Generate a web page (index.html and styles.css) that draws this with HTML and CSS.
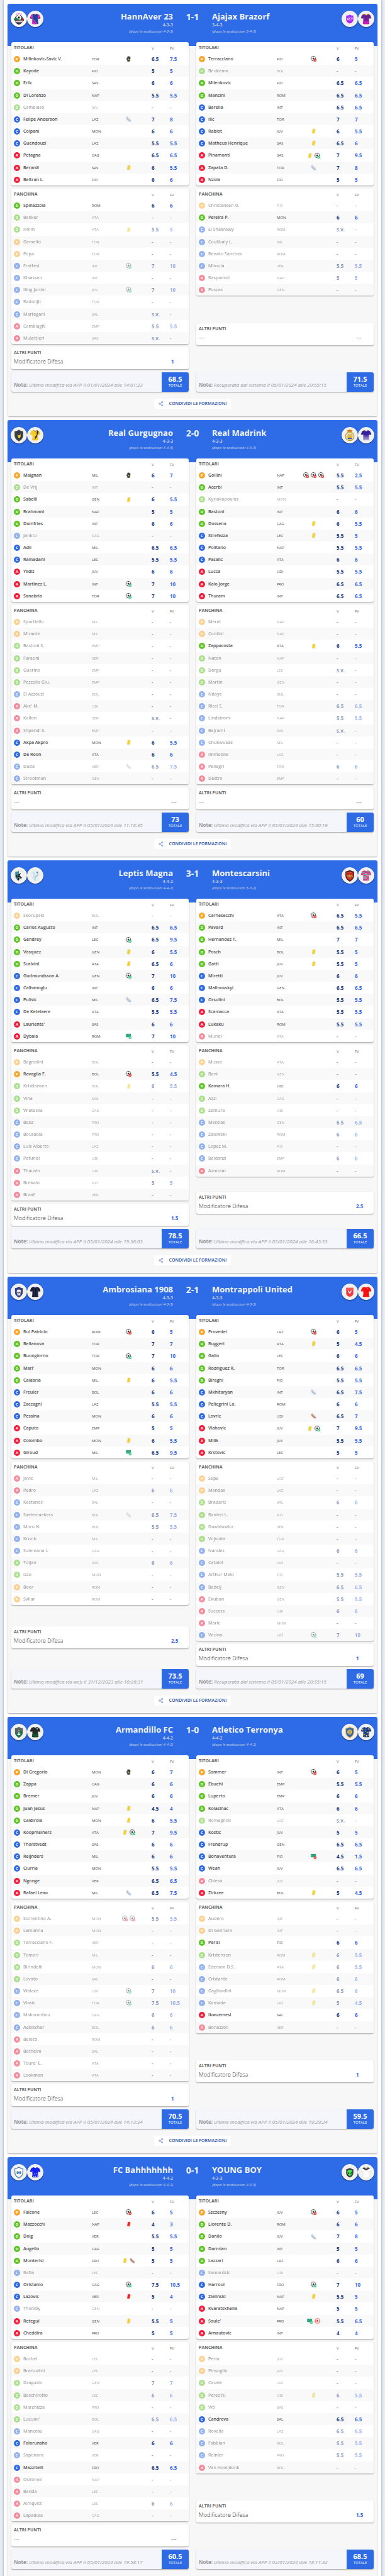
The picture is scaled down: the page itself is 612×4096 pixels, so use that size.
FILE: index.html
```html
<!DOCTYPE html>
<html lang="it">
<head>
<meta charset="utf-8">
<meta name="viewport" content="width=device-width, initial-scale=1">
<title>Formazioni</title>
<link rel="stylesheet" href="styles.css">
</head>
<body>
<svg class="sprite" aria-hidden="true">
  <defs>
    <clipPath id="jersey-clip"><path d="M16 7 21 9 26 7 32 10 36 19 31 21 29.500 17Q28 26 30 35 21 37 12 35 14 26 12.500 17L11 21 6 19 10 10Z"/></clipPath>
    <clipPath id="shield-clip"><path d="M21 7Q26 11 32 11V22Q32 31 21 37 10 31 10 22V11Q16 11 21 7Z"/></clipPath>
    <linearGradient id="fade-indigo" x1="0" y1="0" x2="0" y2="1"><stop offset=".45" stop-color="#33209a"/><stop offset="1" stop-color="#f4f2fa"/></linearGradient>
    <linearGradient id="fade-violet" x1="0" y1="0" x2="0" y2="1"><stop offset="0" stop-color="#9c3bff"/><stop offset="1" stop-color="#b514e8"/></linearGradient>
  </defs>
  <symbol id="ball" viewBox="0 0 14 14">
    <circle cx="6.500" cy="6.500" r="5.800" fill="#fff" stroke="#333" stroke-width=".9"/>
    <path d="M6.500 3.900 9 5.700 8 8.500H5L4 5.700ZM4.500 1 6.500 2 8.500 1 7.500.5h-2ZM.8 5 2.300 5.500 1.500 8.300.7 7ZM12.200 5 10.700 5.500 11.500 8.300 12.300 7ZM3.200 9.700 4.600 10.200 5 12.200 3 11ZM9.800 9.700 8.400 10.200 8 12.200 10 11Z" fill="#333"/>
  </symbol>
  <symbol id="tick" viewBox="0 0 14 14"><circle cx="10.500" cy="10.500" r="3.500" fill="#3ecf86"/><path d="m8.800 10.500 1.300 1.300 2.200-2.400" fill="none" stroke="#fff" stroke-width="1"/></symbol>
  <symbol id="cross" viewBox="0 0 14 14"><circle cx="10.500" cy="10.500" r="3.500" fill="#f0312e"/><path d="m9.300 9.300 2.400 2.400m0-2.400-2.400 2.400" stroke="#fff" stroke-width="1"/></symbol>
  <symbol id="net" viewBox="0 0 14 14"><path d="M.5 1.500h12v8H.5Z" fill="#1f9e74"/><path d="M2 3v5M11 3v5M2 6.500h9M5 2v2h3V2" fill="none" stroke="#7fd9bb" stroke-width=".7"/></symbol>
  <symbol id="ev-b" viewBox="0 0 14 14"><use href="#ball"/><use href="#tick"/></symbol>
  <symbol id="ev-x" viewBox="0 0 14 14"><use href="#ball"/><use href="#cross"/></symbol>
  <symbol id="ev-p" viewBox="0 0 14 14"><use href="#net"/><use href="#tick"/></symbol>
  <symbol id="ev-q" viewBox="0 0 14 14"><use href="#net"/><use href="#cross"/></symbol>
  <symbol id="ev-z" viewBox="0 0 14 14"><circle cx="7" cy="7" r="6" fill="#fff" stroke="#ef3430"/><path d="M7 4.300 9.500 6 8.500 9h-3L4.500 6ZM4.500 1.500 7 3l2.500-1.500ZM1.200 6 3 6.500 2.300 9.500 1.200 8ZM12.800 6 11 6.500 11.700 9.500 12.800 8ZM4 10.500 5.500 11 6 13 4 12ZM10 10.500 8.500 11 8 13 10 12Z" fill="#ef3430"/></symbol>
  <symbol id="ev-y" viewBox="0 0 14 14"><path d="M5.500 1.200 11.300 2.200 9 12.500 3.200 11.500Z" fill="#f5d227"/></symbol>
  <symbol id="ev-r" viewBox="0 0 14 14"><path d="M5.500 1.200 11.300 2.200 9 12.500 3.200 11.500Z" fill="#f3201d"/></symbol>
  <symbol id="ev-s" viewBox="0 0 14 14"><path d="M1 3Q2 .8 4 1L7 5.500 12.800 10.300 12 12.500 8 11.500 2.500 6.500Z" fill="#b9cfe6"/><path d="m2 6 6 5.500 4 1" stroke="#8a9db3" fill="none" stroke-width=".8"/></symbol>
  <symbol id="ev-o" viewBox="0 0 14 14"><path d="M1 3Q2 .8 4 1L7 5.500 12.800 10.300 12 12.500 8 11.500 2.500 6.500Z" fill="#c98d79"/><path d="m2 6 6 5.500 4 1" stroke="#8d5e50" fill="none" stroke-width=".8"/></symbol>
  <symbol id="ev-g" viewBox="0 0 14 14"><path d="M4 13.500 3.500 10 1 6.500 2.200 5.500 3.800 6.800 3.300 2.500 5 2 5.500.8 7.300.7 8 1.200 9.600 1.500 10 3 11.500 3.500 10.800 9.500 9.500 13.500Z" fill="#3f3f42"/><path d="m7.200 6 .7 1.500 1.500.2-1.100 1 .3 1.600-1.400-.8-1.400.8.3-1.600-1.100-1 1.500-.2Z" fill="#f2c92b"/></symbol>
  <symbol id="share" viewBox="0 0 14 14"><g fill="none" stroke="#2b56a8" stroke-width="1"><circle cx="3" cy="7" r="1.800"/><circle cx="10" cy="2.500" r="1.800"/><circle cx="10" cy="11.500" r="1.800"/><path d="m4.600 6 3.800-2.500M4.600 8l3.800 2.500"/></g></symbol>
</svg>
<main class="page" id="page"></main>
<script src="app.js"></script>
</body>
</html>
```

FILE: styles.css
```css
* { box-sizing: border-box; }

html { height: 100%; overflow: hidden; background: #e9eef6; }

body {
  margin: 0;
  height: 100%;
  overflow: hidden;
  font-family: "Open Sans", "Noto Sans", sans-serif;
  font-size: 7px;
  line-height: 10px;
  color: #4c4c4c;
}

.sprite { position: absolute; width: 0; height: 0; }

.page {
  display: flex;
  flex-direction: column;
  gap: 6px;
  margin: 0 6px;
  padding: 6px;
  background: #fff;
  box-shadow: 0 0 4px rgba(60, 70, 90, .5);
}

.match {
  display: flex;
  flex-direction: column;
  align-items: center;
  padding-bottom: 12px;
  border-radius: 3px;
  background: linear-gradient(#2e6be6 67px, #f7f7f7 67px);
  box-shadow: 0 1px 2px rgba(0, 0, 0, .35);
}

.match-head {
  display: grid;
  grid-template-columns: 1fr 62px 1fr;
  width: 100%;
  height: 61px;
  padding: 11px 5px 0;
  color: #f1f3f8;
}

.side { display: flex; justify-content: space-between; align-items: flex-start; }
.side.away { flex-direction: row-reverse; }
.home .names { text-align: right; }

.crests { display: flex; }
.crest {
  width: 26px;
  height: 26px;
  border-radius: 50%;
  background: #f0f0f0;
  border: 1px solid #fff;
  box-shadow: 0 1px 2px rgba(0, 0, 0, .4);
}

.team-name { margin: 0; font-size: 13px; line-height: 18px; font-weight: 700; }
.module { margin: 0; font-weight: 600; color: #ccd3e3; }
.module-after { margin: 0; font-style: italic; font-size: 6px; line-height: 11px; color: #ccd3e3; }
.score { margin: 0; text-align: center; font-size: 14px; line-height: 19px; font-weight: 700; }

.columns { display: grid; grid-template-columns: 1fr 1fr; gap: 12px; width: 100%; padding: 0 6px; }
.column { display: flex; flex-direction: column; gap: 5px; }

.card { border-radius: 3px; background: #fff; box-shadow: 0 1px 2px rgba(0, 0, 0, .35); }

.lineup { width: 100%; table-layout: fixed; border-spacing: 0; }
.col-role { width: 19px; }
.col-club { width: 29px; }
.col-events { width: 60px; }
.col-vote { width: 35px; }
.col-fv { width: 30px; }
.lineup th, .lineup td { padding: 0; text-align: left; }
.lineup thead th { height: 17px; padding-top: 3px; font-weight: 400; font-size: 6px; color: #666; }
.lineup thead .title, .card-title { font-weight: 700; font-size: 7px; color: #666; }
.lineup thead .title { padding: 0 0 0 4px; }
.lineup tbody tr { height: 19px; }
.lineup tbody tr:nth-child(6n+3) { height: 20px; }
.lineup tbody tr:nth-child(even) td { background: #f9f9f9; }
.lineup td:first-child { padding-left: 4px; border-radius: 3px 0 0 3px; }
.lineup td:last-child { border-radius: 0 3px 3px 0; }
.lineup .vote { padding-left: 6px; font-weight: 700; font-size: 8px; color: #18377c; }
.lineup .fv { font-weight: 700; font-size: 8px; color: #3767e6; }
.lineup thead .vote, .lineup thead .fv { font-weight: 400; font-size: 6px; color: #666; }
.player { font-weight: 600; white-space: nowrap; }
.club { font-size: 6px; }
.events { line-height: 0; }
.event-list { display: flex; justify-content: center; gap: 3px; }
.event { width: 9px; height: 9px; filter: drop-shadow(0 0 1px rgba(0, 0, 0, .2)); }
.off td > * { opacity: .5; }

.role {
  display: block;
  width: 10px;
  height: 10px;
  border-radius: 50%;
  color: #fff;
  font-size: 6px;
  font-weight: 700;
  text-align: center;
}
.role-p { background: #faa62a; }
.role-d { background: #5bc51f; }
.role-c { background: #2d6ae3; }
.role-a { background: #f31c3c; }

.extras { height: 35px; margin: auto 0; padding: 4px 8px 0 4px; font-size: 9px; }
.card-title { margin: 0; }
.extra { display: flex; justify-content: space-between; padding-top: 2px; line-height: 14px; }
.extra dt { font-weight: 300; color: #333; }
.extra dd { margin: 0; width: 20px; }
.extra .value { font-weight: 700; font-size: 8px; color: #3767e6; }
.extras dl { margin: 0; }

.footer { display: flex; height: 31px; overflow: hidden; background: #f4f6fb; }
.note { flex: 1; margin: 0; padding: 15px 0 0 4px; font-size: 8px; color: #999; white-space: nowrap; }
.total {
  width: 43px;
  padding-top: 4px;
  background: #2d6ae3;
  color: #fff;
  text-align: center;
  font-size: 6px;
  line-height: 8px;
}
.total strong { display: block; font-size: 11px; line-height: 13px; }

.share {
  display: flex;
  align-items: center;
  gap: 9px;
  height: 16px;
  margin-top: 11px;
  padding: 0 7px;
  border: 0;
  border-radius: 2px;
  background: #fff;
  color: #2650a3;
  font: 600 7px/16px "Open Sans", "Noto Sans", sans-serif;
}
.share svg { width: 8px; height: 8px; }
```

FILE: app.js
```js
const jersey = inner => `<g clip-path="url(#jersey-clip)">${inner}</g>`;
const shield = inner => `<g clip-path="url(#shield-clip)">${inner}</g>`;
const fill = color => `<rect width="42" height="42" fill="${color}"/>`;
const edge = color => `<path d="M21 7Q26 11 32 11V22Q32 31 21 37 10 31 10 22V11Q16 11 21 7Z" fill="none" stroke="${color}" stroke-width="2"/>`;

const art = {
  hann: `${fill('#fff')}<path d="m15 5 1 2 2-1-1 2 1 1-3 0-3 0 1-1-1-2 2 1ZM21 3l1 2 2 0-1 2 0 2-2-1-2 1 0-2-1-2 2 0ZM27 5l1 2 2-1-1 2 1 1h-6l1-1-1-2 2 1Z" fill="#f27bb5"/><path d="M10 22q0-12 11-12t11 12v6q-3 7-11 9-8-2-11-9Z" fill="#26323d"/><circle cx="21" cy="17" r="7" fill="#fff"/><path d="m21 14 3 2-1 4h-4l-1-4ZM15 14l3-3h-2ZM27 14l-3-3h2Z" fill="#222"/><path d="M7 20q6-4 14 2t13 0v4q-6 3-13-1T7 26Z" fill="#268a48"/><path d="M29 20h6v7l-5-2Z" fill="#b3302c"/><path d="M11 26h20v4H11Z" fill="#f1b9cb"/><path d="M13 32h16" stroke="#aebac4"/>`,
  hannJ: jersey(`${fill('#1d4597')}<path d="M0 0h13l1 17-2 5H0ZM42 0H29l-1 17 2 5h12Z" fill="#f32bd0"/><path d="M12 24q3 6 12 14H10ZM12 21q8 4 15 16" stroke="#f32bd0" stroke-width="2" fill="#f32bd0"/><path d="M6 17l6 3M30 20l6-3" stroke="#7c1430" stroke-width="3"/><path d="m16 7 5 3 5-3" fill="none" stroke="#7c1430" stroke-width="2"/>`),
  ajax: `<path d="M11 12q6 0 10-3 4 3 10 3v11q0 7-10 11-10-4-10-11Z" fill="url(#fade-violet)"/><g fill="none" stroke="#fff" stroke-width="1.500"><path d="M17 18q-3 3-2 6 3 1 3-2 0-2-2-1M23 18h-3v3q3 0 2 4h-2M24 26l1-1M27 17q-3 1-1 3 3 0 2-2 0 5-2 6"/></g>`,
  ajaxJ: jersey(`${fill('#652192')}<path d="M8 29l3-3 2 2 2-5 2 6 3-4 3 5 3-7 2 5 3-2v14H8ZM16 20l2 2-1 2ZM24 18l2 2-2 1ZM20 22l2 1-1 2Z" fill="#c91bb8"/><path d="m15 7 6 3 6-3M6 19l5 2M31 21l5-2" fill="none" stroke="#e6b427" stroke-width="2.500"/>`),
  gurg: `${shield(`${fill('#333a40')}<path d="M17 16l1 8 2 5h4l2-5-1-9-1 6h-5Z" fill="#eac63c"/>`)}${edge('#454d54')}`,
  gurgJ: jersey(`${fill('#f5cd2b')}<path d="m27 7-3 10 3-1-8 13 3-1-4 9 10-15-3 1 5-8V8Z" fill="#2a2a2a"/><path d="m16 7 5 3 5-3" fill="none" stroke="#2a2a2a" stroke-width="1.500"/>`),
  drink: `<circle cx="21" cy="24" r="12" fill="#e9d9a0" stroke="#c39b35" stroke-width="2"/><path d="M14 24h14M16 18l10 12M26 18 16 30" stroke="#8c95a0" stroke-width="2"/><path d="M17 22q4-5 8 0l2 5q-6 5-12 0Z" fill="#f3b51d"/><path d="M14 28h14l-2 4h-9Z" fill="#2f63b4"/><path d="m13 5 4 3 4-5 4 5 4-3-2 8H15Z" fill="#d9ab36"/><path d="M16 9h10" stroke="#c7352d" stroke-width="2"/>`,
  drinkJ: jersey(`${fill('url(#fade-indigo)')}<path d="m16 7 5 3 5-3M6 19l5 2M31 21l5-2" fill="none" stroke="#e8c24a" stroke-width="1.500"/>`),
  leptis: `${shield(`${fill('#fff')}<path d="M0 0h21v42H0Z" fill="#3b8b9c"/><path d="M17 20q-3 0-3 3t4 2 5-5 2-4-3 2 2 6 3 4-5 0-4 4 4-1" fill="none" stroke="#1c1c1c" stroke-width="2.500"/>`)}${edge('#d4dde2')}`,
  leptisJ: jersey(`${fill('#e3edf2')}<path d="M24 10q8 6 2 12-8 3-5 15" fill="none" stroke="#9fc6d2" stroke-width="3"/><path d="M14 12q6 2 4 8t-4 9" fill="none" stroke="#c3dbe3" stroke-width="3"/><path d="M24 13h4" stroke="#4c83a8" stroke-width="2"/>`),
  monte: `${shield(`${fill('#d4271f')}<path d="M10 8h22v7H10Z" fill="#b5201b"/><path d="m21 16 5 15-5-6-5 6Z" fill="#d6b05a" stroke="#7a5a1a"/><path d="M13 22h16" stroke="#c9a24a" stroke-width="3"/>`)}${edge('#2a1b23')}<path d="M13 13h16" stroke="#f1d9a0" stroke-dasharray="1 1"/>`,
  monteJ: jersey(`${fill('#e62e7c')}<path d="M8 13h9M20 11h14M14 18l12 1M13 24h8M22 26l8-3M12 31l9-2M23 33h7M28 15l6 3" stroke="#55b5ad" stroke-width="2.500"/><path d="M17 15h7M16 28h8M20 22h9" stroke="#f3c4d3" stroke-width="1.500"/>`),
  ambro: `${shield(`${fill('#3b3f47')}<path d="M10 8h9v30h-9ZM24 8h4v30h-4Z" fill="#3440a0"/>`)}<path d="M15 21q0-6 6-6t6 6q0 4-2 5v5h-8v-5q-2-1-2-5Z" fill="#f5f5f5"/><path d="M17 21h3v3h-3ZM22 21h3v3h-3ZM20 26h2v1h-2ZM19 29v2M21 29v2M23 29v2" fill="#333" stroke="#333" stroke-width=".6"/>`,
  ambroJ: jersey(`${fill('#16161f')}<path d="M15 7v30M19 9v28M24 9v28M28 8v28" stroke="#353a7c" stroke-width="1.500"/><path d="m16 7 5 2 5-2M6 18l5 2M31 20l5-2" stroke="#5346c8" fill="none" stroke-width="2"/>`),
  mont: `<path d="M11 10h20v15q0 8-10 10-10-2-10-10Z" fill="#ef3b3f"/><path d="M11 10h20v6H11Z" fill="#f15a58"/><path d="m15 18 3 0 3 5 3-5h3l-5 8h-2Z" fill="#fff"/>`,
  montJ: jersey(`${fill('#fb1212')}<path d="M13 16h16M14 22l14-2M14 28h14M6 19l5 2M31 21l5-2" stroke="#c40c0c"/><path d="M24 12h2" stroke="#fff"/>`),
  arma: `${shield(`${fill('#1d6f4a')}<path d="M0 0h42v16L0 26Z" fill="#59625f"/>`)}<path d="M21 14q2 4 0 6-2-2 0-6ZM20 21h2v5h4q-1 4-5 4t-5-4h4Z" fill="#fff"/>`,
  armaJ: jersey(`${fill('#242827')}<path d="M8 31l3-5 3 2 2-6 3 5 2-3 3 5 3-7 3 5 2-2v14H8Z" fill="#0f4a2b"/><path d="m14 25 3 5-2 4M24 23l2 5-3 6M19 28l1 5M6 19l5 2M31 21l5-2" stroke="#2c7a45" fill="none"/><path d="M25 12h3" stroke="#fff" stroke-width="2"/>`),
  terro: `${shield(fill('#2c5da6'))}${edge('#d9b94d')}<circle cx="21" cy="21" r="7" fill="#d9bb53"/><path d="m17 19 3 1M22 20l3-1M19 25q2-2 4 0M21 20v3M16 15l2 2M26 15l-2 2M15 26l3-1M27 26l-3-1" stroke="#2c5da6" fill="none"/>`,
  terroJ: jersey(`${fill('#1b3f8c')}<path d="m10 11 4 3-3 3ZM28 9l3 4-4 2ZM17 17l3 3-2 2ZM24 20l4 2-4 3ZM14 26l4 1-3 3ZM20 29l5 2-4 4ZM26 27l3 3-3 1ZM13 34h4v3h-4ZM19 12l3 1-2 2Z" fill="#f3c52e"/><path d="M6 19l5 2M31 21l5-2" stroke="#f3c52e" stroke-width="3"/>`),
  bahh: `${shield(fill('#fff'))}${edge('#3b74ab')}<path d="m15 18 5 1 1 3 1-3 5-1 0 8-4 0-2-3-2 3-4 0Z" fill="#3b74ab"/><path d="m17 20 2 3M25 20l-2 3" stroke="#cfe0ef"/>`,
  bahhJ: jersey(`${fill('#1620ee')}<path d="m14 27 2 1-1 2ZM18 24l3 2-2 2ZM23 26l3-2 1 3ZM16 31l3 1-2 3ZM22 30l2 2-3 2ZM26 31l3-1-1 4ZM13 34l3 0-1 3ZM23 36l3-1v3ZM20 35h2v2h-2Z" fill="#fff"/><path d="M24 12h2" stroke="#9fb0ff"/>`),
  young: `<path d="m21 9 10 4v10q0 8-10 13-10-5-10-13V13Z" fill="#3c4044"/><path d="M21 14q7 0 7 6 0 7-7 12-7-5-7-12 0-6 7-6Z" fill="#48e04e"/><path d="m15 20 5 3-1 3q-4-1-4-6ZM27 20l-5 3 1 3q4-1 4-6Z" fill="#143c18"/>`,
  youngJ: jersey(`${fill('#fdfdfd')}<path d="m10 10 11 6 11-6-6-4H16Z" fill="#3b4248"/><path d="m16 7 5 4 5-4" fill="#fff" stroke="#dcb53c" stroke-width="1.500"/><path d="M6 18l5 2M31 20l5-2" stroke="#e8c552" stroke-width="2"/><path d="M13 18v17M29 18v17" stroke="#dadada"/>`)
};

/* Player line: role, name, club, events, vote, fantasy vote. A leading "~" marks a player who does not count. */
const matches = [
  {
    score: '1-1',
    teams: [
      { name: 'HannAver 23', module: '4-3-3', after: '4-3-3', art: 'hann', mod: '1', total: '68.5', note: 'Ultima modifica via APP il 01/01/2024 alle 14:01:33',
        starters: `P|Milinkovic-Savic V.|TOR|g|6.5|7.5
D|Kayode|FIO||5|5
D|Erlic|SAS||6|6
D|Di Lorenzo|NAP||5.5|5.5
~D|Cambiaso|JUV||-|-
C|Felipe Anderson|LAZ|s|7|8
C|Colpani|MON||6|6
C|Guendouzi|LAZ||5.5|5.5
A|Petagna|CAG||6.5|6.5
A|Berardi|SAS|y|6|5.5
A|Beltran L.|FIO||6|6`,
        bench: `D|Spinazzola|ROM||6|6
~D|Bakker|ATA||-|-
~D|Holm|ATA|y|5.5|5
~P|Gemello|TOR||-|-
~P|Popa|TOR||-|-
~C|Frattesi|INT|b|7|10
~C|Klaassen|INT||-|-
~C|Iling Junior|JUV|b|7|10
~C|Radonjic|TOR||-|-
~C|Martegani|SAL||s.v.|-
~A|Cambiaghi|EMP||5.5|5.5
~A|Mulattieri|SAS||s.v.|-` },
      { name: 'Ajajax Brazorf', module: '3-4-3', after: '3-4-3', art: 'ajax', mod: '', total: '71.5', note: 'Recuperata dal sistema il 05/01/2024 alle 20:55:15',
        starters: `P|Terracciano|FIO|x|6|5
~D|Beukema|BOL||-|-
D|Milenkovic|FIO||6.5|6.5
D|Mancini|ROM||6.5|6.5
C|Barella|INT||6.5|6.5
C|Ilic|TOR||7|7
C|Rabiot|JUV|y|6|5.5
C|Matheus Henrique|SAS|y|6.5|6
A|Pinamonti|SAS|yb|7|9.5
A|Zapata D.|TOR|s|7|8
A|Nzola|FIO||5|5`,
        bench: `~P|Christensen O.|FIO||-|-
D|Pereira P.|MON||6|6
~C|El Shaarawy|ROM||s.v.|-
~C|Coulibaly L.|SAL||-|-
~C|Renato Sanches|ROM||-|-
~C|Mboula|VER||5.5|5.5
~A|Raspadori|NAP||5|5
~A|Puscas|GEN||-|-` }
    ]
  },
  {
    score: '2-0',
    teams: [
      { name: 'Real Gurgugnao', module: '4-3-3', after: '3-4-3', art: 'gurg', mod: '', total: '73', note: 'Ultima modifica via APP il 05/01/2024 alle 11:18:35',
        starters: `P|Maignan|MIL|g|6|7
~D|De Vrij|INT||-|-
D|Sabelli|GEN|y|6|5.5
D|Rrahmani|NAP||5|5
D|Dumfries|INT||6|6
~C|Jankto|CAG||-|-
C|Adli|MIL||6.5|6.5
C|Ramadani|LEC||5.5|5.5
A|Yildiz|JUV||6|6
A|Martinez L.|INT|b|7|10
A|Sanabria|TOR|b|7|10`,
        bench: `~P|Sportiello|MIL||-|-
~P|Mirante|MIL||-|-
~D|Bastoni S.|EMP||-|-
~D|Faraoni|VER||-|-
~D|Guarino|EMP||-|-
~D|Pezzella Giu.|EMP||-|-
~C|El Azzouzi|BOL||-|-
~A|Ake' M.|UDI||-|-
~A|Kallon|VER||s.v.|-
~A|Shpendi S.|EMP||-|-
C|Akpa Akpro|MON|y|6|5.5
C|De Roon|ATA||6|6
~C|Duda|VER|s|6.5|7.5
~C|Strootman|GEN||-|-` },
      { name: 'Real Madrink', module: '4-3-3', after: '4-3-3', art: 'drink', mod: '', total: '60', note: 'Ultima modifica via APP il 05/01/2024 alle 15:00:19',
        starters: `P|Gollini|NAP|xxx|5.5|2.5
D|Acerbi|INT||5.5|5.5
~D|Kyriakopoulos|MON||-|-
D|Bastoni|INT||6|6
D|Dossena|CAG|y|6|5.5
C|Strefezza|LEC|y|5.5|5
C|Politano|NAP||5.5|5.5
C|Pasalic|ATA||6|6
A|Lucca|UDI||5.5|5.5
A|Kaio Jorge|FRO||6.5|6.5
A|Thuram|INT||6.5|6.5`,
        bench: `~P|Meret|NAP||-|-
~P|Contini|NAP||-|-
D|Zappacosta|ATA|y|6|5.5
~D|Natan|NAP||-|-
~D|Dorgu|LEC||s.v.|-
~D|Martin|GEN||-|-
~C|Ndoye|BOL||-|-
~C|Ricci S.|TOR||6.5|6.5
~C|Lindstrom|NAP||5.5|5.5
~C|Bajrami|SAS||s.v.|-
~C|Chukwueze|MIL||-|-
~A|Immobile|LAZ||-|-
~A|Pellegri|TOR||6|6
~A|Destro|EMP||-|-` }
    ]
  },
  {
    score: '3-1',
    teams: [
      { name: 'Leptis Magna', module: '4-4-2', after: '4-4-2', art: 'leptis', mod: '1.5', total: '78.5', note: 'Ultima modifica via APP il 05/01/2024 alle 19:36:03',
        starters: `~P|Skorupski|BOL||-|-
D|Carlos Augusto|INT||6.5|6.5
D|Gendrey|LEC|b|6.5|9.5
D|Vasquez|GEN|y|6|5.5
D|Scalvini|ATA|y|6.5|6
C|Gudmundsson A.|GEN|b|7|10
C|Calhanoglu|INT||6|6
C|Pulisic|MIL|s|6.5|7.5
C|De Ketelaere|ATA||5.5|5.5
A|Lauriente'|SAS||6|6
A|Dybala|ROM|p|7|10`,
        bench: `~P|Bagnolini|BOL||-|-
P|Ravaglia F.|BOL|x|5.5|4.5
~D|Kristiansen|BOL|y|6|5.5
~D|Vina|SAS||-|-
~D|Wieteska|CAG||-|-
~C|Baez|FRO||-|-
~C|Bourabia|FRO||-|-
~C|Luis Alberto|LAZ||-|-
~C|Pafundi|UDI||-|-
~A|Thauvin|UDI||s.v.|-
~A|Brekalo|FIO||5|5
~A|Braaf|VER||-|-` },
      { name: 'Montescarsini', module: '4-3-3', after: '5-3-2', art: 'monte', mod: '2.5', total: '66.5', note: 'Ultima modifica via APP il 05/01/2024 alle 16:43:55',
        starters: `P|Carnesecchi|ATA|x|6.5|5.5
D|Pavard|INT||6.5|6.5
D|Hernandez T.|MIL||7|7
D|Posch|BOL|y|5.5|5
D|Gatti|JUV|y|5.5|5
C|Miretti|JUV||6|6
C|Malinovskyi|GEN||6.5|6.5
C|Orsolini|BOL||5.5|5.5
A|Scamacca|ATA||5.5|5.5
A|Lukaku|ROM||5.5|5.5
~A|Muriel|ATA||-|-`,
        bench: `~P|Musso|ATA||-|-
~D|Bani|GEN||-|-
D|Kamara H.|UDI||6|6
~D|Azzi|CAG||-|-
~D|Zemura|UDI||-|-
~C|Messias|GEN||6.5|6.5
~C|Zalewski|ROM||6|6
~C|Lopez M.|FIO||-|-
~C|Baldanzi|EMP||6|6
~A|Azmoun|ROM||-|-` }
    ]
  },
  {
    score: '2-1',
    teams: [
      { name: 'Ambrosiana 1908', module: '4-3-3', after: '4-3-3', art: 'ambro', mod: '2.5', total: '73.5', note: 'Ultima modifica via web il 31/12/2023 alle 10:26:31',
        starters: `P|Rui Patricio|ROM|x|6|5
D|Bellanova|TOR||7|7
D|Buongiorno|TOR|b|7|10
D|Mari'|MON||6|6
D|Calabria|MIL|y|6|5.5
C|Freuler|BOL||6|6
C|Zaccagni|LAZ||5.5|5.5
C|Pessina|MON||6|6
A|Caputo|EMP||5|5
A|Colombo|MON|y|6|5.5
A|Giroud|MIL|p|6.5|9.5`,
        bench: `~A|Jovic|MIL||-|-
~A|Pedro|LAZ||6|6
~C|Kastanos|SAL||-|-
~C|Saelemaekers|BOL|s|6.5|7.5
~C|Moro N.|BOL||5.5|5.5
~C|Krunic|MIL||-|-
~C|Sulemana I.|CAG||-|-
~D|Toljan|SAS||6|6
~D|Izzo|MON||-|-
~P|Boer|ROM||-|-
~P|Svilar|ROM||-|-` },
      { name: 'Montrappoli United', module: '4-3-3', after: '4-3-3', art: 'mont', mod: '1', total: '69', note: 'Recuperata dal sistema il 05/01/2024 alle 20:55:15',
        starters: `P|Provedel|LAZ|x|6|5
D|Ruggeri|ATA|y|5|4.5
D|Gallo|LEC||6|6
D|Rodriguez R.|TOR||6.5|6.5
D|Biraghi|FIO||5.5|5.5
C|Mkhitaryan|INT|s|6.5|7.5
C|Pellegrini Lo.|ROM||6|6
C|Lovric|UDI|o|6.5|7
A|Vlahovic|JUV|yb|7|9.5
A|Milik|JUV||5.5|5.5
A|Krstovic|LEC||5|5`,
        bench: `~P|Sepe|LAZ||-|-
~P|Mandas|LAZ||-|-
~D|Bradaric|SAL||6|6
~D|Ranieri L.|FIO||-|-
~D|Dawidowicz|VER||-|-
~D|Vojvoda|TOR||-|-
~C|Nandez|CAG||6|6
~C|Cataldi|LAZ||-|-
~C|Arthur Melo|FIO||5.5|5.5
~C|Badelj|GEN||6.5|6.5
~A|Ekuban|GEN||5.5|5.5
~A|Success|UDI||6|6
~A|Maric|MON||-|-
~C|Vecino|LAZ|b|7|10` }
    ]
  },
  {
    score: '1-0',
    teams: [
      { name: 'Armandillo FC', module: '4-4-2', after: '4-4-2', art: 'arma', mod: '1', total: '70.5', note: 'Ultima modifica via APP il 05/01/2024 alle 14:13:34',
        starters: `P|Di Gregorio|MON|g|6|7
D|Zappa|CAG||6|6
D|Bremer|JUV||6|6
D|Juan Jesus|NAP|y|4.5|4
D|Caldirola|MON|y|6|5.5
C|Koopmeiners|ATA|yb|7|9.5
C|Thorstvedt|SAS||6|6
C|Reijnders|MIL||6|6
C|Ciurria|MON||5.5|5.5
A|Ngonge|VER||6.5|6.5
A|Rafael Leao|MIL|s|6.5|7.5`,
        bench: `~P|Sorrentino A.|MON|xx|5.5|3.5
~P|Lamanna|MON||-|-
~D|Terracciano F.|VER||-|-
~D|Tomori|MIL||-|-
~D|Birindelli|MON||6|6
~D|Lovato|SAL||-|-
~C|Walace|UDI|b|7|10
~C|Vlasic|TOR|b|7.5|10.5
~C|Makoumbou|CAG||6|6
~C|Aebischer|BOL||6|6
~A|Belotti|ROM||-|-
~A|Botheim|SAL||-|-
~A|Toure' E.|ATA||-|-
~A|Lookman|ATA||-|-` },
      { name: 'Atletico Terronya', module: '4-4-2', after: '4-4-2', art: 'terro', mod: '1', total: '59.5', note: 'Ultima modifica via APP il 05/01/2024 alle 19:29:24',
        starters: `P|Sommer|INT|x|6|5
D|Ebuehi|EMP||5.5|5.5
D|Luperto|EMP||6|6
D|Kolasinac|ATA||6|6
~D|Romagnoli|LAZ||s.v.|-
C|Kostic|JUV||5|5
C|Frendrup|GEN||6.5|6.5
C|Bonaventura|FIO|q|4.5|1.5
C|Weah|JUV||6.5|6.5
~A|Chiesa|JUV||-|-
A|Zirkzee|BOL|y|5|4.5`,
        bench: `~P|Audero|INT||-|-
~P|Di Gennaro|INT||-|-
D|Parisi|FIO||6|6
~D|Kristensen|ROM|y|6|5.5
~C|Ederson D.S.|ATA|y|6|5.5
~C|Cristante|ROM||6|6
~C|Gagliardini|MON|y|6.5|6
~C|Kamada|LAZ|y|5|4.5
A|Ikwuemesi|SAL||6|6
~A|Bonazzoli|VER||-|-` }
    ]
  },
  {
    score: '0-1',
    teams: [
      { name: 'FC Bahhhhhhh', module: '4-4-2', after: '4-4-2', art: 'bahh', mod: '', total: '60.5', note: 'Ultima modifica via APP il 05/01/2024 alle 19:58:17',
        starters: `P|Falcone|LEC|x|6|5
D|Mazzocchi|NAP|r|4|3
D|Doig|VER||5.5|5.5
D|Augello|CAG||5|5
D|Monterisi|FRO|yo|5|5
~C|Rafia|LEC||-|-
C|Oristanio|CAG|b|7.5|10.5
C|Lazovic|VER|r|5|4
~C|Thorsby|GEN||-|-
A|Retegui|GEN|y|5.5|5
A|Cheddira|FRO||5|5`,
        bench: `~P|Borbei|LEC||-|-
~P|Brancolini|LEC||-|-
~D|Dragusin|GEN||7|7
~D|Baschirotto|LEC||6|6
~D|Marchizza|FRO||-|-
~D|Lucumi'|BOL||6.5|6.5
~C|Mancosu|CAG||-|-
C|Folorunsho|VER||6|6
~C|Saponara|VER||-|-
C|Mazzitelli|FRO||6.5|6.5
~A|Osimhen|NAP||-|-
~A|Banda|LEC||-|-
~A|Almqvist|LEC||6|6
~A|Lapadula|CAG||-|-` },
      { name: 'YOUNG BOY', module: '4-3-3', after: '4-3-3', art: 'young', mod: '1.5', total: '68.5', note: 'Ultima modifica via APP il 02/01/2024 alle 18:11:32',
        starters: `P|Szczesny|JUV|x|6|5
D|Llorente D.|ROM||6|6
D|Danilo|JUV|s|7|8
D|Darmian|INT||5|5
D|Lazzari|LAZ||6|6
~C|Samardzic|UDI||-|-
C|Harroui|FRO|b|7|10
C|Zielinski|NAP|y|5.5|5
A|Kvaratskhelia|NAP||5|5
A|Soule'|FRO|pz|5.5|6.5
A|Arnautovic|INT||4|4`,
        bench: `~P|Perin|JUV||-|-
~P|Pinsoglio|JUV||-|-
~D|Casale|LAZ||-|-
~D|Perez N.|UDI|y|6|5.5
~D|Viti|SAS||-|-
C|Candreva|SAL||6.5|6.5
~C|Rovella|LAZ||6.5|6.5
~C|Fabbian|BOL||5.5|5.5
~C|Reinier|FRO||5.5|5.5
~A|Van Hooijdonk|BOL||-|-` }
    ]
  }
];

const playerRow = line => {
  const off = line.startsWith('~');
  const [role, name, club, events, vote, fv] = line.replace('~', '').split('|');
  const icons = [...events].map(e => `<svg class="event"><use href="#ev-${e}"/></svg>`).join('');
  return `<tr${off ? ' class="off"' : ''}>
    <td><span class="role role-${role.toLowerCase()}">${role}</span></td>
    <td class="player"><span>${name}</span></td>
    <td class="club"><span>${club}</span></td>
    <td class="events"><div class="event-list">${icons}</div></td>
    <td class="vote"><span>${vote}</span></td>
    <td class="fv"><span>${fv}</span></td>
  </tr>`;
};

const lineup = (title, lines) => `<section class="card"><table class="lineup">
  <colgroup><col class="col-role"><col><col class="col-club"><col class="col-events"><col class="col-vote"><col class="col-fv"></colgroup>
  <thead><tr><th class="title" colspan="4" scope="colgroup">${title}</th><th class="vote" scope="col">V</th><th class="fv" scope="col">FV</th></tr></thead>
  <tbody>${lines.split('\n').map(playerRow).join('')}</tbody>
</table></section>`;

const extras = mod => `<section class="card extras"><h3 class="card-title">ALTRI PUNTI</h3><dl><div class="extra">
  ${mod ? `<dt>Modificatore Difesa</dt><dd class="value">${mod}</dd>` : '<dt>---</dt><dd>---</dd>'}
</div></dl></section>`;

const column = team => `<div class="column">
  ${lineup('TITOLARI', team.starters)}
  ${lineup('PANCHINA', team.bench)}
  ${extras(team.mod)}
  <footer class="card footer"><p class="note"><b>Note:</b> <i>${team.note}</i></p><div class="total"><strong>${team.total}</strong>TOTALE</div></footer>
</div>`;

const crest = key => `<svg class="crest" viewBox="0 0 42 42">${art[key]}</svg>`;

const side = (team, place) => `<div class="side ${place}">
  <div class="crests">${crest(team.art)}${crest(team.art + 'J')}</div>
  <div class="names"><h2 class="team-name">${team.name}</h2><p class="module">${team.module}</p><p class="module-after">(dopo le sostituzioni ${team.after})</p></div>
</div>`;

document.getElementById('page').innerHTML = matches.map(m => `<article class="match">
  <header class="match-head">${side(m.teams[0], 'home')}<p class="score">${m.score}</p>${side(m.teams[1], 'away')}</header>
  <div class="columns">${m.teams.map(column).join('')}</div>
  <button class="share" type="button"><svg><use href="#share"/></svg>CONDIVIDI LE FORMAZIONI</button>
</article>`).join('');
```
